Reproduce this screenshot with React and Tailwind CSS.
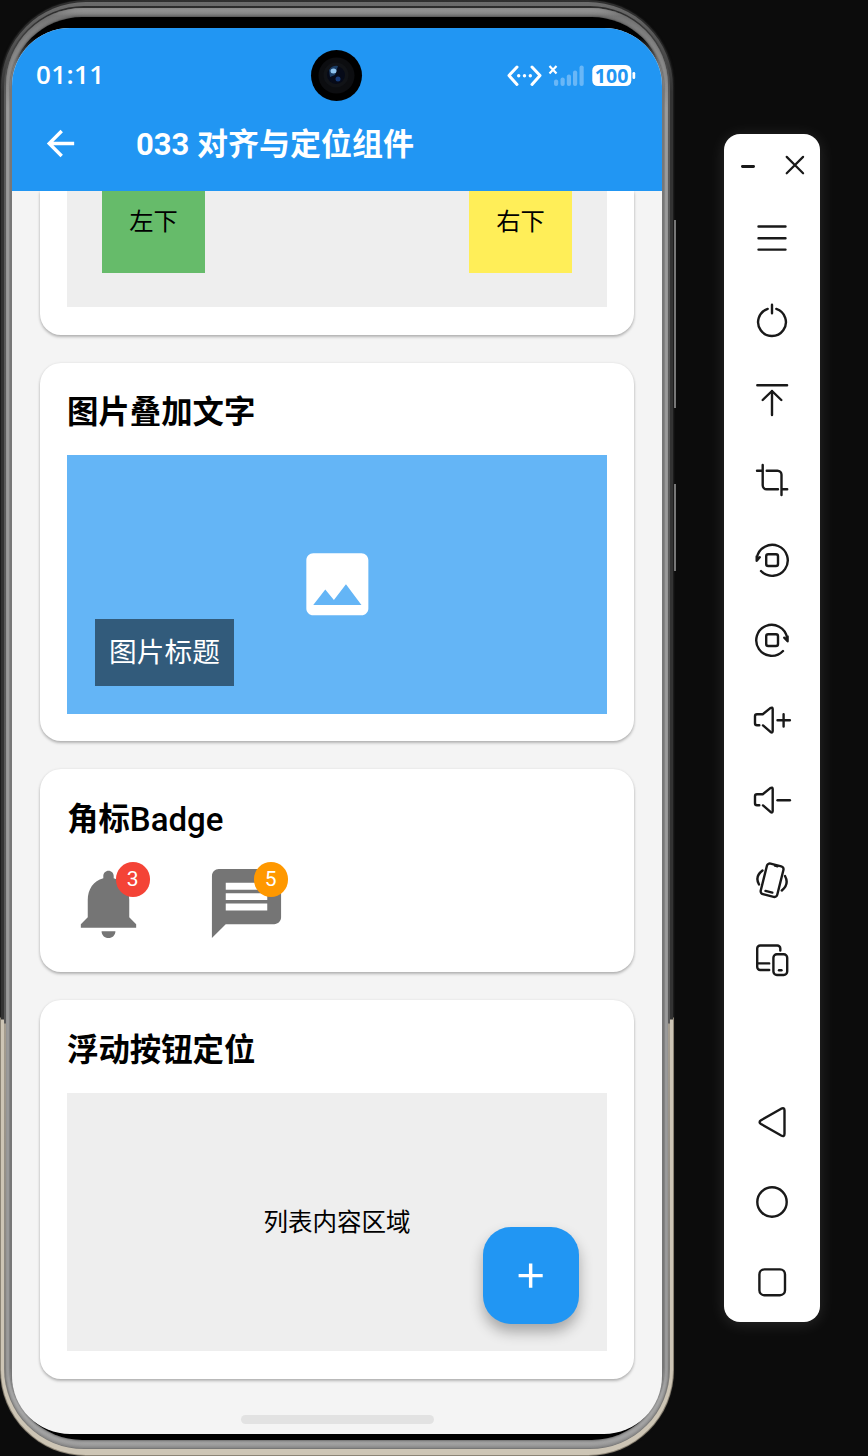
import React from "react";

function Card({ title, className, children }) {
  return (
    <section
      className={
        "w-[594px] shrink-0 rounded-[21px] bg-white px-[27px] shadow-[0_2px_3px_rgba(0,0,0,0.26),0_0_3px_rgba(0,0,0,0.07)] " +
        className
      }
    >
      {title}
      {children}
    </section>
  );
}

function Title({ className, children }) {
  return (
    <h2
      className={
        "flex items-center pt-[8px] text-[31.4px] leading-[40px] font-bold whitespace-nowrap text-black " + className
      }
    >
      {children}
    </h2>
  );
}

function Badge({ color, children }) {
  return (
    <span
      className={
        "absolute top-0 right-0 flex size-[34.500px] items-center justify-center rounded-full pt-[1px] font-['Roboto',sans-serif] text-[21px] leading-none text-white " +
        color
      }
    >
      {children}
    </span>
  );
}

function StatusBar() {
  return (
    <div className="flex h-[95px] items-center pr-[26px] pl-[24px] text-white">
      <span className="w-[100px] pb-[3px] font-['Open_Sans',sans-serif] text-[26px] leading-none font-semibold tracking-[0.4px]">
        01:11
      </span>
      <div className="ml-[175px] flex size-[51px] items-center justify-center rounded-full bg-black">
        <svg width="51" height="51" viewBox="0 0 51 51">
          <circle cx="25.500" cy="25.500" r="18" fill="#0c0d10" />
          <circle cx="25" cy="25" r="12.500" fill="#111317" />
          <circle cx="25" cy="25" r="9" fill="#060a18" />
          <path d="M18 20a9 9 0 0 1 9-4l-3 9-5 2z" fill="#1b3c63" />
          <ellipse cx="22.500" cy="21" rx="3" ry="2.500" fill="#8fc4ee" />
          <circle cx="27" cy="29" r="2.500" fill="#163a78" />
        </svg>
      </div>
      <svg className="ml-auto" width="130" height="26" viewBox="506 63 130 26">
        <g fill="none" stroke="#fff" strokeWidth="3" strokeLinecap="round" strokeLinejoin="round">
          <path d="M517 67l-8 8.500 8 9M532 67l8 8.500-8 9" />
        </g>
        <g fill="#fff">
          <circle cx="518.700" cy="75.700" r="1.700" />
          <circle cx="524.500" cy="75.700" r="1.700" />
          <circle cx="530.300" cy="75.700" r="1.700" />
        </g>
        <path d="M549.500 66l7 7.500M556.500 66l-7 7.500" stroke="#fff" strokeWidth="2.200" />
        <g fill="#69b7f7">
          <rect x="554" y="79.500" width="4.200" height="6.500" rx="2" />
          <rect x="560.500" y="77.500" width="4.200" height="8.500" rx="2" />
          <rect x="566.800" y="74.500" width="4.200" height="11.500" rx="2" />
          <rect x="573" y="70.500" width="4.200" height="15.500" rx="2" />
          <rect x="579.500" y="65.500" width="4.200" height="20.500" rx="2" />
        </g>
        <rect x="592.300" y="65" width="39" height="21" rx="5.500" fill="#fff" />
        <rect x="632.500" y="72" width="2.700" height="7" rx="1.300" fill="#fff" />
        <text
          x="611.600"
          y="82.700"
          textAnchor="middle"
          fontFamily="Open Sans, sans-serif"
          fontSize="19.500"
          fontWeight="700"
          fill="#2196f3"
        >
          100
        </text>
      </svg>
    </div>
  );
}

function Screen() {
  return (
    <div className="flex h-[1406px] w-[650px] flex-col overflow-hidden rounded-[58px] bg-[#f4f4f4]">
      <header className="h-[163px] shrink-0 bg-[#2196f3]">
        <StatusBar />
        <div className="flex h-[40px] items-center pl-[28px] text-white">
          <svg width="41" height="41" viewBox="0 0 24 24" fill="currentColor">
            <path d="M20 11H7.830l5.590-5.590L12 4l-8 8 8 8 1.410-1.410L7.830 13H20v-2z" />
          </svg>
          <h1 className="ml-[55px] pt-[3px] text-[31px] leading-[37px] font-bold whitespace-nowrap">
            033 对齐与定位组件
          </h1>
        </div>
      </header>

      <main className="flex min-h-0 flex-1 flex-col items-center overflow-hidden">
        <section className="h-[144px] w-[594px] shrink-0 rounded-b-[21px] bg-white px-[27px] shadow-[0_2px_3px_rgba(0,0,0,0.26),0_0_3px_rgba(0,0,0,0.07)]">
          <div className="flex h-[116px] justify-between bg-[#eeeeee] px-[35px] text-[24.3px] leading-none text-black">
            <div className="flex h-[82px] w-[103px] justify-center bg-[#66bb6a] pt-[19px]">左下</div>
            <div className="flex h-[82px] w-[103px] justify-center bg-[#ffee58] pt-[19px]">右下</div>
          </div>
        </section>

        <Card title={<Title className="h-[92px]">图片叠加文字</Title>} className="mt-[28px] h-[378px]">
          <div className="relative flex h-[259px] items-center justify-center bg-[#64b5f6]">
            <svg width="82.700" height="82.700" viewBox="0 0 24 24" fill="#fff">
              <path d="M21 19V5c0-1.100-.9-2-2-2H5c-1.100 0-2 .9-2 2v14c0 1.100.9 2 2 2h14c1.100 0 2-.9 2-2zM8.500 13.500l2.500 3.010L14.500 12l4.500 6H5l3.500-4.500z" />
            </svg>
            <div className="absolute bottom-[28px] left-[28px] flex h-[67px] w-[139px] items-center justify-center bg-[#325b7b] text-[27.7px] leading-none whitespace-nowrap text-white">
              图片标题
            </div>
          </div>
        </Card>

        <Card
          title={
            <Title className="h-[93px]">
              角标
              <span className="font-['Roboto',sans-serif] text-[33px] font-medium">Badge</span>
            </Title>
          }
          className="mt-[28px] h-[203px]"
        >
          <div className="flex gap-[55px]">
            <div className="relative size-[83px]">
              <svg width="83" height="83" viewBox="0 0 24 24" fill="#757575">
                <path d="M12 22c1.100 0 2-.9 2-2h-4c0 1.100.89 2 2 2zm6-6v-5c0-3.070-1.640-5.640-4.500-6.320V4c0-.83-.67-1.500-1.500-1.500s-1.500.67-1.500 1.500v.68C7.630 5.360 6 7.920 6 11v5l-2 2v1h16v-1l-2-2z" />
              </svg>
              <Badge color="bg-[#f44336]">3</Badge>
            </div>
            <div className="relative size-[83px]">
              <svg width="83" height="83" viewBox="0 0 24 24" fill="#757575">
                <path d="M20 2H4c-1.100 0-1.990.9-1.990 2L2 22l4-4h14c1.100 0 2-.9 2-2V4c0-1.100-.9-2-2-2zm-2 12H6v-2h12v2zm0-3H6V9h12v2zm0-3H6V6h12v2z" />
              </svg>
              <Badge color="bg-[#ff9800]">5</Badge>
            </div>
          </div>
        </Card>

        <Card title={<Title className="h-[93px]">浮动按钮定位</Title>} className="mt-[28px] h-[379px]">
          <div className="relative flex h-[258px] items-center justify-center bg-[#eeeeee] text-[24.5px] leading-none text-black">
            <span className="pt-[2px]">列表内容区域</span>
            <button className="absolute right-[28px] bottom-[27px] flex h-[97px] w-[96px] items-center justify-center rounded-[28px] bg-[#2196f3] shadow-[0_8px_14px_rgba(0,0,0,0.3)]">
              <svg width="41.300" height="41.300" viewBox="0 0 24 24" fill="#fff">
                <path d="M19 13h-6v6h-2v-6H5v-2h6V5h2v6h6v2z" />
              </svg>
            </button>
          </div>
        </Card>

        <div className="mt-[36px] h-[9px] w-[193px] shrink-0 rounded-full bg-[#e2e2e2]" />
      </main>
    </div>
  );
}

function Phone() {
  return (
    <div className="relative h-[1456px] w-[676px] shrink-0">
      <i className="absolute top-[220px] right-0 h-[188px] w-[2px] bg-[#777]" />
      <i className="absolute top-[484px] right-0 h-[87px] w-[2px] bg-[#777]" />
      <div className="h-[1456px] w-[674px] rounded-[86px] bg-[linear-gradient(#303030_0,#1c1c1c_90px,#1c1c1c_1017px,#8c8475_1018px,#8c8475_100%)] p-px pt-[2px] shadow-[0_0_2px_#222]">
        <div className="h-[1453px] rounded-[85px] bg-[linear-gradient(#6c6c6c_0,#333_90px,#333_1017px,#cdc5b5_1018px,#cdc5b5_100%)] px-[3px] pt-[4px]">
          <div className="h-[1443px] rounded-[80px] bg-[linear-gradient(#2c2c2c_0,#5a5a5a_90px,#585858_1017px,#a59d8f_1018px,#777_100%)] px-[2px] pt-[2px]">
            <div className="h-[1440px] rounded-[77px] bg-[linear-gradient(#a5a5a5_0,#777_8px,#9b9b9b_70px,#b4b4b4_100px,#b4b4b4_1390px,#a0a0a0_100%)] px-[4px] pt-[9px] shadow-[inset_0_0_4px_#666]">
              <div className="h-[1423px] rounded-[72px] bg-[linear-gradient(#000_0,#000_20px,#777_48px,#777_1376px,#000_1404px)] px-[2px] pt-[11px] shadow-[0_0_3px_#333]">
                <div className="flex justify-center">
                  <Screen />
                </div>
              </div>
            </div>
          </div>
        </div>
      </div>
    </div>
  );
}

function Tool({ label, children }) {
  return (
    <button aria-label={label} className="flex h-[80px] w-full shrink-0 items-center justify-center">
      <svg
        width="48"
        height="48"
        viewBox="0 0 48 48"
        fill="none"
        stroke="#191919"
        strokeWidth="2.400"
        strokeLinecap="round"
        strokeLinejoin="round"
      >
        {children}
      </svg>
    </button>
  );
}

const speaker =
  "M11.300 29.300H9a2 2 0 0 1-2-2v-7a2 2 0 0 1 2-2h5.700l7.600-6.200q2.400-1.400 2.400 1v22q0 2.200-2.200.8l-7.500-6.500";

function Toolbar() {
  return (
    <aside className="mt-[134px] ml-[48px] flex h-[1188px] w-[96px] shrink-0 flex-col rounded-[16px] bg-white shadow-[0_2px_16px_rgba(255,255,255,0.12)]">
      <div className="flex h-[66px] shrink-0 items-start justify-between px-[14px] pt-[20px]">
        <svg width="20" height="24" viewBox="0 0 20 24">
          <path d="M4.400 12.500h11.200" stroke="#191919" strokeWidth="2.800" strokeLinecap="round" />
        </svg>
        <svg width="22" height="22" viewBox="0 0 22 22">
          <path d="M2.700 2.900l16.400 16.400M19.100 2.900L2.700 19.300" stroke="#191919" strokeWidth="2.200" strokeLinecap="round" />
        </svg>
      </div>
      <Tool label="Menu">
        <path d="M10.500 10.500h27M10.500 22.200h27M10.500 33.600h27" />
      </Tool>
      <Tool label="Power">
        <path d="M24 8.700v8.500M19.700 12.900a13.900 13.900 0 1 0 8.600 0" />
      </Tool>
      <Tool label="Swipe up">
        <path d="M9.300 9.200h29.800M24 15v24M14.700 24l9.300-9 9.300 9" />
      </Tool>
      <Tool label="Screenshot">
        <path d="M14.700 9v20.200a4 4 0 0 0 4 4H30M9 14.700h5.700M18.700 14.700h10.800a4 4 0 0 1 4 4V39M33.500 33.200h5.700" />
      </Tool>
      <Tool label="Rotate left">
        <path d="M9 21.500A15.500 15.500 0 1 1 13 35M8.700 20.500v4.300l3-3.600" />
        <rect x="18.200" y="18.200" width="11.800" height="11.800" rx="2" />
      </Tool>
      <Tool label="Rotate right">
        <path d="M39 21.500A15.500 15.500 0 1 0 35 35M39.600 20.500v4.800l-3.300-3.600" />
        <rect x="18.200" y="18.200" width="11.800" height="11.800" rx="2" />
      </Tool>
      <Tool label="Volume up">
        <path d={speaker} />
        <path d="M29.500 24.300h12.400M35.600 18.200v12.300" />
      </Tool>
      <Tool label="Volume down">
        <path d={speaker} />
        <path d="M29.500 24.300h12.400" />
      </Tool>
      <Tool label="Shake">
        <rect x="15.600" y="8.500" width="17" height="31.500" rx="3" transform="rotate(14 24.100 24.200)" />
        <path d="M27 9.600l2.500.7M17.500 34.900l6.800 1.700M14.500 14.500Q6.500 20.500 11 28.500M37 20Q41.500 28 33.800 34.500" />
      </Tool>
      <Tool label="Multi device">
        <path d="M32.300 14.500V12.500a3 3 0 0 0-3-3H12.200a3 3 0 0 0-3 3V31a3 3 0 0 0 3 3h9M9.200 27.400h12" />
        <rect x="25.400" y="18.200" width="13.800" height="20.800" rx="3.500" />
        <path d="M31 34.200h2.500" />
      </Tool>
      <div className="h-[82px] shrink-0" />
      <Tool label="Back">
        <path d="M13 22.300L33.200 10.700Q36.500 9.200 36.500 12.500V35.700Q36.500 39.200 33.200 37.500L13 26Q10.200 24.200 13 22.300z" />
      </Tool>
      <Tool label="Home">
        <circle cx="24" cy="24" r="14.700" />
      </Tool>
      <Tool label="Recents">
        <rect x="11.400" y="11.400" width="25.600" height="25.800" rx="5" />
      </Tool>
    </aside>
  );
}

export default function App() {
  return (
    <div className="flex h-[1456px] w-[868px] overflow-hidden bg-[#0c0c0c] font-['Roboto','Noto_Sans_CJK_SC',sans-serif]">
      <Phone />
      <Toolbar />
    </div>
  );
}
